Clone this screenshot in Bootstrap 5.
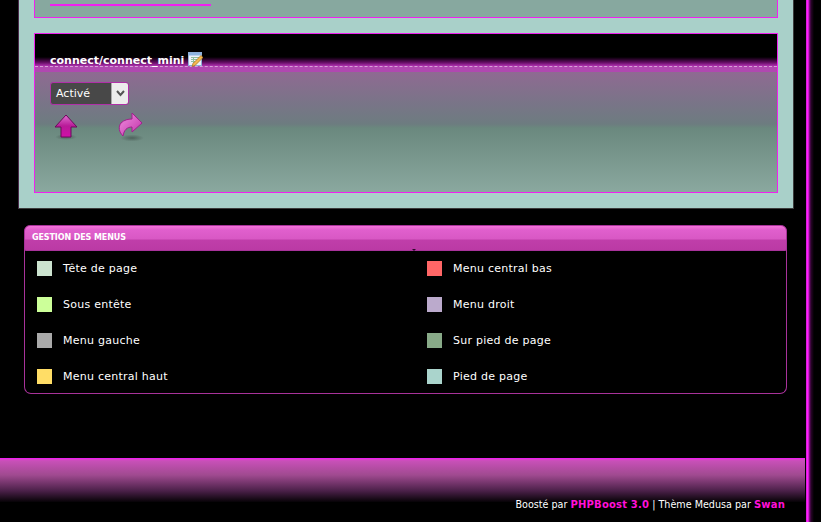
<!DOCTYPE html>
<html lang="fr">
<head>
<meta charset="utf-8">
<title>Gestion des menus</title>
<link href="https://cdn.jsdelivr.net/npm/bootstrap@5.3.0/dist/css/bootstrap.min.css" rel="stylesheet">
<style>
html,body{height:100%;margin:0;background:#000;overflow:hidden}
body{font-family:"DejaVu Sans",Verdana,sans-serif;font-size:11px;color:#fff}
.shell{height:522px;width:821px}
.stage{width:806px;height:522px}
.rail{width:15px;height:522px;background:linear-gradient(90deg,#c01ac0 0,#ff1fff 1px,#ff1fff 2px,#a012a0 3px,#5a0a5a 4px,#2a052a 5px,#000 8px)}
.main-panel{margin-left:18px;width:776px;height:209px;background:#a9d0c9;border:1px solid #3c3c3c;border-top:0;border-left-color:#4a2a4a;padding:0 15px}
.top-box{height:18px;border:1px solid #f020f0;border-top:0;background:#87a89f;padding:4px 0 0 15px}
.top-line{width:161px;height:2px;background:#f020f0}
.mod-box{margin-top:15px;height:160px;border:1px solid #f020f0;background:#87a89f}
.mod-head{height:32px;background:linear-gradient(180deg,#000 0,#000 23px,#5a0a5a 28px,#b030b0 32px);padding:18px 0 0 15px;font-weight:700;line-height:13px}
.mod-sep{height:6px;background:#b048b0;border-top:1px dashed #d8a0d8}
.mod-body{height:120px;overflow:hidden;background:linear-gradient(180deg,#8f6a92 0,#7a7488 30px,#6d7c80 52px,#6a887e 56px,#8aa89f 120px)}
.state-box{width:79px;height:23px;margin:10px 0 0 15px;border:1px solid #b030a8;border-radius:3px;background:#484848;line-height:22px;overflow:hidden}
.state-text{padding-left:5px}
.state-btn{width:17px;background:#ececec;border-left:1px solid #aaa}
.arrows{margin:9px 0 0 19px;gap:40px}
.ico-up{width:24px;height:26px}
.ico-fwd{width:26px;height:30px;margin-top:-2px}
.menu-card{margin:16px 0 0 24px;width:763px;height:169px;border:1px solid #a8329a;border-top:0;border-radius:7px;background:#000}
.menu-title{height:26px;margin:0 -1px;background:linear-gradient(180deg,#f573da 0,#e05fcd 4px,#d858c4 13px,#c03eaa 14px,#bb3aa5 100%);border:1px solid #a8329a;border-radius:6px 6px 2px 2px;padding-left:7px;line-height:23px;font-size:8px;font-weight:700;letter-spacing:-.1px;position:relative}
.menu-title::after{content:"";position:absolute;left:387px;bottom:-1px;border:2px solid transparent;border-bottom:0;border-top-color:#2a0a2a}
.left-col{flex:0 0 390px}
.right-col{flex:1 1 auto}
.legend-item{height:36px;padding-left:12px;gap:11px;font-size:11px;letter-spacing:.25px}
.chip{width:15px;height:15px;flex:none;margin-top:-2px}
.foot-band{margin:64px 1px 0 0;height:44px;background:linear-gradient(180deg,#e040d0 0,#c850b8 2px,#a04a90 16px,#4a2048 32px,#000 44px);border-top:1px solid #f020f0}
.foot-text{height:17px;margin-top:-4px;padding-right:21px;font-size:9.6px;line-height:14px;position:relative}
.foot-text a{color:#ff10d8;font-size:10px;font-weight:700;letter-spacing:.2px;text-decoration:none}
</style>
</head>
<body>
<div class="shell d-flex">
  <div class="stage">
    <div class="main-panel">
      <div class="top-box"><div class="top-line"></div></div>
      <div class="mod-box">
        <div class="mod-head">connect/connect_mini
          <svg width="15" height="15" viewBox="0 0 15 15" style="vertical-align:-3px">
            <rect x=".5" y=".5" width="13" height="13" fill="#eef3fb" stroke="#8fb0d8"/>
            <rect x="1" y="1" width="12" height="2.5" fill="#8cb4e0"/>
            <path d="M3 5.5h8M3 7.5h6M3 9.5h4M5.5 5v6" stroke="#8fc0a0" stroke-width="1"/>
            <path d="M13 3.5l2 2-8 8-3 1 1-3z" fill="#f4b850" stroke="#a86a10" stroke-width=".7"/>
          </svg>
        </div>
        <div class="mod-sep"></div>
        <div class="mod-body">
          <div class="state-box d-flex justify-content-between">
            <span class="state-text">Activé</span>
            <span class="state-btn d-flex align-items-center justify-content-center">
              <svg width="9" height="7" viewBox="0 0 9 7"><path d="M1 1l3.5 4L8 1" fill="none" stroke="#555" stroke-width="2"/></svg>
            </span>
          </div>
          <div class="arrows d-flex">
            <svg class="ico-up" viewBox="0 0 24 26">
              <defs>
                <linearGradient id="ug" x1="0" y1="0" x2="0" y2="1"><stop offset="0" stop-color="#e070d0"/><stop offset=".5" stop-color="#b81a98"/><stop offset="1" stop-color="#d010a8"/></linearGradient>
                <radialGradient id="sh"><stop offset="0" stop-color="#000" stop-opacity=".3"/><stop offset="1" stop-color="#000" stop-opacity="0"/></radialGradient>
              </defs>
              <ellipse cx="12" cy="23" rx="11" ry="3" fill="url(#sh)"/>
              <path d="M12 1L23 13H17V23H7V13H1Z" fill="url(#ug)" stroke="#6a0a5a" stroke-width="1"/>
            </svg>
            <svg class="ico-fwd" viewBox="0 0 26 30">
              <defs>
                <linearGradient id="fg" x1="0" y1="0" x2="1" y2="1"><stop offset="0" stop-color="#f090e0"/><stop offset="1" stop-color="#c030a8"/></linearGradient>
              </defs>
              <ellipse cx="14" cy="26" rx="12" ry="3.5" fill="url(#sh)"/>
              <path d="M14 1L24 11L14 20V15C9 15 6 18 5 24C1 20 0 15 3 11C6 8 10 7 14 7Z" fill="url(#fg)" stroke="#a0208c" stroke-width="1"/>
            </svg>
          </div>
        </div>
      </div>
    </div>
    <div class="menu-card">
      <div class="menu-title">GESTION DES MENUS</div>
      <div class="d-flex">
        <div class="left-col">
          <div class="legend-item d-flex align-items-center"><span class="chip" style="background:#cce3cf"></span>Tête de page</div>
          <div class="legend-item d-flex align-items-center"><span class="chip" style="background:#ccff99"></span>Sous entête</div>
          <div class="legend-item d-flex align-items-center"><span class="chip" style="background:#aaaaaa"></span>Menu gauche</div>
          <div class="legend-item d-flex align-items-center"><span class="chip" style="background:#ffdd66"></span>Menu central haut</div>
        </div>
        <div class="right-col">
          <div class="legend-item d-flex align-items-center"><span class="chip" style="background:#ff6666"></span>Menu central bas</div>
          <div class="legend-item d-flex align-items-center"><span class="chip" style="background:#bbaacc"></span>Menu droit</div>
          <div class="legend-item d-flex align-items-center"><span class="chip" style="background:#88aa88"></span>Sur pied de page</div>
          <div class="legend-item d-flex align-items-center"><span class="chip" style="background:#aad4cc"></span>Pied de page</div>
        </div>
      </div>
    </div>
    <div class="foot-band"></div>
    <div class="foot-text text-end">Boosté par <a href="#">PHPBoost 3.0</a> | Thème Medusa par <a href="#">Swan</a></div>
  </div>
  <div class="rail"></div>
</div>
<script src="https://cdn.jsdelivr.net/npm/bootstrap@5.3.0/dist/js/bootstrap.bundle.min.js"></script>
</body>
</html>
